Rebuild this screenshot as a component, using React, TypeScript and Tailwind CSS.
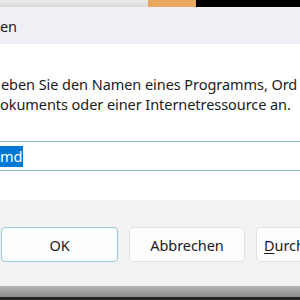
export default function App() {
  return (
    <div className="w-[300px] h-[300px] overflow-hidden bg-white text-[14.5px] leading-[20px] tracking-[-0.06px] text-[#1b1b1b] font-['Noto_Sans','Segoe_UI',sans-serif]">
      {/* strip of the window behind */}
      <div className="flex h-[7px]">
        <div className="w-[148px] bg-gradient-to-b from-[#ecebeb] to-[#dcdada]" />
        <div className="w-[48px] bg-[#e8a862]" />
        <div className="flex-1 bg-black" />
      </div>

      {/* title bar */}
      <div className="h-[37px] bg-[#eff0f5] flex items-center">
        <span className="whitespace-nowrap">en</span>
      </div>

      {/* body */}
      <div className="h-[156px] pt-[30px]">
        <p className="whitespace-nowrap pl-px">eben Sie den Namen eines Programms, Ord</p>
        <p className="whitespace-nowrap">okuments oder einer Internetressource an.</p>

        <div className="mt-[27px] h-[30px] border-y border-[#8eaec6] flex items-center">
          <span className="bg-[#0078d4] text-white h-[21px] flex items-center pr-px">md</span>
        </div>
      </div>

      {/* footer */}
      <div className="h-[86px] bg-[#f3f3f3] pt-[27px] flex gap-[11px] pl-px">
        <button className="w-[117px] h-[35px] shrink-0 rounded-[4px] border border-[#9cc7dc] bg-[#fcfeff]">
          OK
        </button>
        <button className="w-[116px] h-[35px] shrink-0 rounded-[4px] border border-[#e2e2e2] bg-[#fdfdfd]">
          Abbrechen
        </button>
        <button className="w-[116px] h-[35px] shrink-0 rounded-[4px] border border-[#e2e2e2] bg-[#fdfdfd] text-left pl-[7px]">
          <span className="underline underline-offset-2">D</span>urch
        </button>
      </div>

      {/* desktop below */}
      <div className="h-[11px] bg-gradient-to-b from-[#b4b4b4] to-[#8c8c8c]" />
      <div className="h-[3px] bg-[#242424]" />
    </div>
  )
}
